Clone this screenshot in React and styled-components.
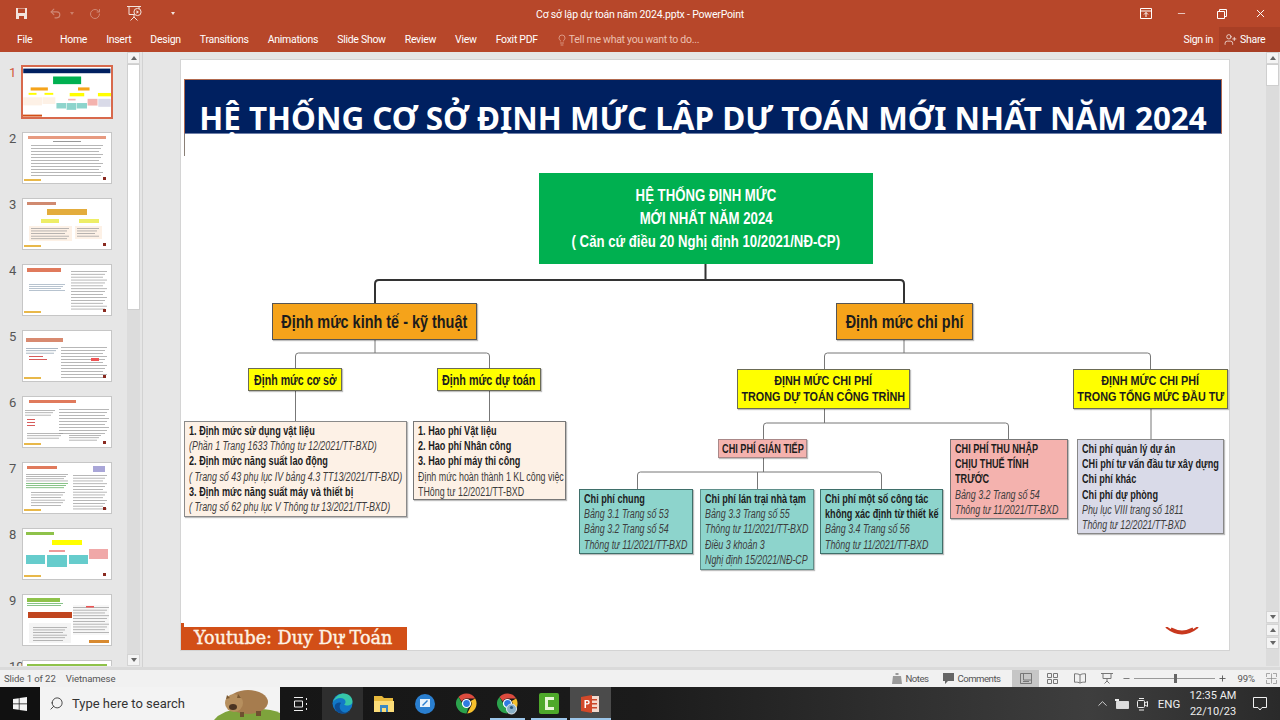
import React from "react";
import styled, { createGlobalStyle } from "styled-components";
import { Lightbulb, Search, UserPlus, X, Minus, Plus, ChevronUp, Undo2, RotateCw } from "lucide-react";

const Global = createGlobalStyle`
  html, body { margin: 0; padding: 0; background: #e6e6e6; }
  * { box-sizing: border-box; }
`;

const UI = `Roboto, "Noto Sans", sans-serif`;
const DIAGRAM = `"Liberation Sans", Arial, sans-serif`;

const Page = styled.div`
  width: 1280px;
  height: 720px;
  overflow: hidden;
  display: flex;
  flex-direction: column;
  font-family: ${UI};
`;

/* ribbon */
const Ribbon = styled.header`
  height: 52px;
  flex: none;
  background: #b7472a;
  color: #fff;
  display: flex;
  flex-direction: column;
`;
const TitleRow = styled.div`
  height: 27px;
  display: flex;
  align-items: center;
  position: relative;
  padding-left: 15px;
`;
const Qat = styled.div`
  display: flex;
  align-items: center;
  width: 190px;
`;
const QatSlot = styled.span`
  display: flex;
  align-items: center;
  justify-content: center;
  width: ${p => p.$w}px;
  opacity: ${p => (p.$dim ? 0.35 : 1)};
`;
const Caret = styled.i`
  width: 0;
  height: 0;
  border-left: 2px solid transparent;
  border-right: 2px solid transparent;
  border-top: 3px solid #f3e4de;
`;
const DocTitle = styled.div`
  position: absolute;
  left: 536px;
  top: 8px;
  font-size: 10.5px;
  letter-spacing: -0.2px;
  white-space: nowrap;
`;
const WindowButtons = styled.div`
  margin-left: auto;
  display: flex;
  align-items: center;
  padding-right: 2px;
`;
const WinBtn = styled.span`
  display: flex;
  justify-content: center;
  width: ${p => p.$w}px;
`;
const TabRow = styled.nav`
  height: 25px;
  display: flex;
  align-items: center;
  font-size: 10.5px;
  letter-spacing: -0.28px;
  padding-left: 17px;
`;
const FileTab = styled.span`
  width: 43px;
`;
const Tab = styled.span`
  margin-right: 19px;
  white-space: nowrap;
`;
const TellMe = styled.span`
  display: flex;
  align-items: center;
  gap: 1px;
  margin-left: -1px;
  color: #ecc0b0;
  white-space: nowrap;
`;
const Account = styled.div`
  margin-left: auto;
  display: flex;
  align-items: center;
  height: 100%;
`;
const SignIn = styled.span`
  margin-right: 6px;
`;
const Share = styled.span`
  width: 61px;
  height: 100%;
  padding-left: 5px;
  background: #a83f25;
  display: flex;
  align-items: center;
  gap: 3px;
`;

/* work area */
const Work = styled.main`
  flex: 1;
  min-height: 0;
  display: flex;
  background: #e6e6e6;
`;
const ThumbPane = styled.aside`
  width: 143px;
  flex: none;
  display: flex;
  border-right: 1px solid #d2d2d2;
  overflow: hidden;
`;
const ThumbList = styled.div`
  width: 127px;
  flex: none;
  padding-top: 15px;
  display: flex;
  flex-direction: column;
  gap: 16px;
  height: 614px;
  overflow: hidden;
`;
const ThumbRow = styled.div`
  height: 50px;
  flex: none;
  display: flex;
  padding-left: 9px;
  color: ${p => (p.$active ? "#d2583c" : "#555")};
  font-size: 13px;
  line-height: 16px;
`;
const ThumbNo = styled.span`
  width: 14px;
  margin-top: -2px;
`;
const ThumbCard = styled.svg`
  display: block;
  width: 88px;
  height: 50px;
  background: #fff;
  outline: ${p => (p.$active ? "2px solid #d8694c" : "1px solid #c6c6c6")};
`;
const Scroll = styled.div`
  width: 13px;
  height: 614px;
  flex: none;
  background: #dcdcdc;
  display: flex;
  flex-direction: column;
`;
const ScrollBtn = styled.div`
  height: 12px;
  flex: none;
  background: #f4f4f4;
  border: 1px solid #d4d4d4;
  display: flex;
  align-items: center;
  justify-content: center;
  margin-top: ${p => p.$mt || 0}px;
`;
const Arrow = styled.i`
  width: 0;
  height: 0;
  border-left: 3.5px solid transparent;
  border-right: 3.5px solid transparent;
  ${p => (p.$down ? "border-top: 4px solid #666;" : "border-bottom: 4px solid #666;")}
`;
const ScrollThumb = styled.div`
  height: ${p => p.$h}px;
  flex: none;
  background: #fff;
  border: 1px solid #cfcfcf;
`;
const Canvas = styled.section`
  flex: 1;
  min-width: 0;
  padding: 8px 0 0 38px;
`;
const Slide = styled.div`
  position: relative;
  width: 1048px;
  height: 590px;
  background: #fff;
  box-shadow: 0 0 0 1px #d4d4d4;
`;
const MainScroll = styled(Scroll)`
  margin-right: 1px;
`;

/* slide content */
const Banner = styled.h1`
  position: absolute;
  left: 3px;
  top: 19px;
  width: 1038px;
  height: 55px;
  margin: 0;
  background: #002060;
  border: 1px solid #b06a50;
  border-bottom-color: #6f7fa8;
  color: #fff;
  font: 700 31.4px "Noto Sans", sans-serif;
  line-height: 76px;
  text-align: center;
  white-space: nowrap;
`;
const BannerTail = styled.div`
  position: absolute;
  left: 3px;
  top: 74px;
  width: 1px;
  height: 22px;
  background: #8a7f76;
`;
const Wires = styled.svg`
  position: absolute;
  inset: 0;
  width: 100%;
  height: 100%;
`;
const Node = styled.div`
  position: absolute;
  left: ${p => p.$x - 181}px;
  top: ${p => p.$y - 60}px;
  width: ${p => p.$w}px;
  height: ${p => p.$h}px;
  background: ${p => p.$bg};
  border: 1px solid ${p => p.$line || "#6b6b55"};
  box-shadow: ${p => (p.$flat ? "none" : "1px 1px 1px rgba(0,0,0,.25)")};
  font-family: ${DIAGRAM};
  color: #1c1c1c;
`;
const CenterNode = styled(Node)`
  display: flex;
  flex-direction: column;
  align-items: center;
  justify-content: center;
  font-weight: 700;
  font-size: ${p => p.$size}px;
  line-height: ${p => p.$lh}px;
  color: ${p => p.$color || "#1c1c1c"};
`;
const Line = styled.span`
  display: block;
  flex: none;
  width: max-content;
  white-space: nowrap;
  transform: scaleX(${p => p.$sx || 0.8});
  transform-origin: center;
`;
const ListNode = styled(Node)`
  padding: 2px 0 0 4px;
  font-size: 12px;
  line-height: 15.2px;
`;
const Head = styled.span`
  display: block;
  width: max-content;
  white-space: nowrap;
  font-weight: 700;
  transform: scaleX(0.76);
  transform-origin: left;
`;
const Note = styled.span`
  display: block;
  width: max-content;
  white-space: nowrap;
  font-style: ${p => (p.$plain ? "normal" : "italic")};
  color: #3d3d3d;
  transform: scaleX(0.74);
  transform-origin: left;
`;
const YoutubeBar = styled.div`
  position: absolute;
  left: 0;
  bottom: 0;
  width: 226px;
  height: 23px;
  background: #d24f17;
  color: #fdf3e6;
  font: 400 17.6px "DejaVu Serif", serif;
  -webkit-text-stroke: 0.4px #fdf3e6;
  line-height: 23px;
  padding-left: 13px;
  white-space: nowrap;
`;
const YoutubeNotch = styled.i`
  position: absolute;
  left: 0;
  bottom: 23px;
  width: 3px;
  height: 4px;
  background: #d24f17;
`;
const LogoArc = styled.svg`
  position: absolute;
  left: 984px;
  top: 567px;
  width: 34px;
  height: 10px;
`;

/* status bar */
const Gutter = styled.div`
  height: 3px;
  flex: none;
  background: #dadada;
`;
const Status = styled.footer`
  height: 17px;
  flex: none;
  background: #f1f1f1;
  color: #555;
  font-size: 9.6px;
  letter-spacing: -0.1px;
  display: flex;
  align-items: center;
  white-space: nowrap;
`;
const StatusText = styled.span`
  margin-left: ${p => p.$ml}px;
`;
const StatusRight = styled.div`
  margin-left: auto;
  height: 100%;
  display: flex;
  align-items: center;
`;
const StatusItem = styled.span`
  display: flex;
  align-items: center;
  gap: 3px;
  margin-left: ${p => p.$ml || 0}px;
  margin-right: ${p => p.$mr || 0}px;
`;
const StatusLabel = styled(StatusItem)`
  letter-spacing: -0.5px;
`;
const ViewBtn = styled.span`
  width: 27px;
  height: 100%;
  display: flex;
  align-items: center;
  justify-content: center;
  background: ${p => (p.$active ? "#c6c6c6" : "transparent")};
`;
const ZoomTrack = styled.span`
  position: relative;
  width: 81px;
  height: 1px;
  background: #999;
`;
const ZoomKnob = styled.i`
  position: absolute;
  left: 40px;
  top: -4px;
  width: 3px;
  height: 9px;
  background: #666;
`;

/* taskbar */
const Taskbar = styled.footer`
  height: 33px;
  flex: none;
  display: flex;
  align-items: stretch;
  color: #eee;
  background: linear-gradient(90deg, #121212 0%, #1b1b1b 50%, #3e3e3e 85%, #2a2a2a 100%);
`;
const StartBtn = styled.div`
  width: 40px;
  background: #111;
  display: flex;
  align-items: center;
  justify-content: center;
`;
const SearchBox = styled.div`
  position: relative;
  width: 240px;
  background: #f3f3f3;
  color: #333;
  display: flex;
  align-items: center;
  padding-left: 9px;
  gap: 8px;
  font-size: 13px;
  overflow: hidden;
`;
const SearchGlass = styled(Search)`
  transform: scaleX(-1);
`;
const Mascot = styled.svg`
  position: absolute;
  right: 0;
  bottom: 0;
  width: 66px;
  height: 33px;
`;
const TaskSlot = styled.div`
  position: relative;
  width: ${p => p.$w || 41.3}px;
  display: flex;
  align-items: center;
  justify-content: center;
  background: ${p => p.$bg || "transparent"};
`;
const RunMark = styled.i`
  position: absolute;
  bottom: 0;
  left: ${p => p.$l || 0}px;
  right: ${p => p.$r || 0}px;
  height: 2px;
  background: #9cc6ea;
`;
const Tray = styled.div`
  margin-left: auto;
  display: flex;
  align-items: center;
  font-size: 11.5px;
  white-space: nowrap;
`;
const TraySlot = styled.span`
  display: flex;
  align-items: center;
  justify-content: center;
  width: ${p => p.$w}px;
`;
const Clock = styled.span`
  width: 54px;
  text-align: center;
  line-height: 16px;
  font-size: 11px;
`;

const lines = (x, y, w, n, step, c = "#999") =>
  Array.from({ length: n }, (_, i) => [x, y + i * step, w - (i % 3) * 2, 0.7, c]);
const sc = ([x, y, w, h, c]) => [(x - 181) * 0.084, (y - 60) * 0.084, w * 0.084, h * 0.084, c];

const thumb1 = [
  [184, 79, 1038, 55, "#002060"], [539, 173, 334, 91, "#00b050"], [272, 303, 205, 37, "#f5a31a"],
  [836, 303, 137, 37, "#f5a31a"], [248, 368, 94, 23, "#ff0"], [437, 368, 104, 23, "#ff0"],
  [737, 369, 173, 40, "#ff0"], [1073, 369, 155, 40, "#ff0"], [184, 421, 223, 96, "#fdf1e6"],
  [413, 421, 153, 79, "#fdf1e6"], [718, 439, 89, 19, "#f4b2ae"], [950, 439, 118, 80, "#f4b2ae"],
  [1077, 439, 147, 95, "#d9dae8"], [579, 489, 114, 65, "#8dd4cc"], [700, 489, 114, 81, "#8dd4cc"],
  [820, 489, 123, 65, "#8dd4cc"], [181, 627, 226, 23, "#d24f17"],
].map(sc);

const foot = [[1, 46, 17, 2, "#e8b84a"], [80, 44, 3, 3, "#8a2a20"]];
const THUMBS = [
  thumb1,
  [[5, 3, 78, 3, "#e79a80"], [30, 8, 28, 1, "#999"], ...lines(8, 12, 72, 11, 3), ...foot],
  [[4, 3, 29, 3, "#d08a70"], [24, 10, 40, 6, "#e3ac3c"], [18, 20, 18, 4, "#ee6"], [56, 20, 20, 4, "#ee6"],
   [6, 27, 43, 15, "#fdf1e6"], [52, 27, 27, 13, "#fdf1e6"], ...lines(8, 29, 38, 5, 2.6), ...lines(54, 29, 22, 4, 2.6), ...foot],
  [[4, 3, 34, 4, "#e07a5c"], ...lines(6, 19, 36, 4, 2, "#9ab"), ...lines(48, 6, 36, 14, 2.9), ...foot],
  [[3, 7, 37, 4, "#d88a70"], ...lines(3, 17, 32, 3, 2.4, "#89a"), [6, 25, 14, 0.8, "#c33"], [6, 28, 18, 0.8, "#c33"],
   ...lines(38, 16, 46, 11, 3), [68, 27, 8, 3, "#e55"], ...foot],
  [[6, 3, 47, 3, "#e07a5c"], ...lines(2, 13, 30, 3, 2.4), [4, 22, 8, 0.8, "#c33"], [4, 25, 8, 0.8, "#c33"], [4, 28, 8, 0.8, "#c33"],
   ...lines(36, 12, 50, 9, 3), ...lines(4, 36, 36, 3, 2.4), ...lines(46, 38, 32, 3, 2.4), ...foot],
  [[4, 3, 30, 3, "#e07a5c"], [70, 3, 12, 6, "#a9a6d8"], ...lines(3, 11, 42, 4, 2.2), ...lines(3, 20, 42, 3, 2.2, "#5a5"),
   ...lines(8, 29, 34, 6, 2.6), ...lines(50, 12, 34, 13, 2.8), ...foot],
  [[3, 3, 28, 3, "#8ec24a"], [29, 11, 30, 5, "#ff0"], [26, 21, 16, 2, "#e99"], [3, 26, 19, 9, "#6cc"], [24, 26, 20, 12, "#6cc"],
   [46, 26, 19, 9, "#6cc"], [66, 20, 19, 10, "#f0a8a8"], ...foot],
  [[4, 3, 33, 4, "#8ec24a"], ...lines(4, 8, 36, 2, 2, "#5a5"), [5, 17, 44, 6, "#c0451f"], [6, 28, 42, 20, "#f4f4f4"], ...lines(10, 32, 34, 6, 2.6),
   [50, 10, 36, 30, "#f7f7f7"], ...lines(50, 12, 36, 10, 2.8), [63, 11, 8, 1.5, "#e55"], [66, 45, 20, 3, "#d88a30"]],
  [[4, 3, 80, 3, "#8ec24a"]],
];

const SaveIcon = () => (
  <svg width="13" height="13" viewBox="0 0 13 13">
    <path d="M1 1h11v11H1z" fill="#f3e4de" />
    <path d="M3 1.500h7v4.500H3z" fill="#b7472a" />
    <path d="M4 9h5v3H4z" fill="#b7472a" />
  </svg>
);
const PresentIcon = () => (
  <svg width="16" height="17" viewBox="0 0 16 17" fill="none" stroke="#f3e4de">
    <path d="M0 1.500h14M2 1.500v8h10v-8M7 10v2M3.500 15.500L7 12l3.500 3.500" />
    <circle cx="10.500" cy="7" r="3.600" fill="#b7472a" />
    <path d="M9.500 5.200l2.500 1.800-2.500 1.800z" fill="#f3e4de" stroke="none" />
  </svg>
);
const RibbonDisplay = () => (
  <svg width="12" height="11" viewBox="0 0 12 11" fill="none" stroke="#fff">
    <path d="M.5.5h11v10H.5zM.5 3h11" />
    <path d="M6 9V4.500M4 6.500l2-2 2 2" />
  </svg>
);
const RestoreIcon = () => (
  <svg width="10" height="10" viewBox="0 0 10 10" fill="none" stroke="#fff">
    <path d="M.5 2.500h7v7h-7zM2.500 2.500v-2h7v7h-2" />
  </svg>
);
const WindowsLogo = () => (
  <svg width="14" height="14" viewBox="0 0 14 14" fill="#f4f4f4">
    <path d="M0 2l5.800-.8v5.400H0zM6.500 1.100L14 0v6.600H6.500zM0 7.300h5.800v5.500L0 12zM6.500 7.300H14V14l-7.500-1z" />
  </svg>
);
const NotesIcon = () => (
  <svg width="10" height="11" viewBox="0 0 10 11" fill="#9a9a9a">
    <path d="M3.500 0h3v2h-3zM1 3h8l1 8H0z" />
  </svg>
);
const CommentIcon = () => (
  <svg width="11" height="11" viewBox="0 0 11 11" fill="#666">
    <path d="M0 0h11v8H5l-3 3V8H0z" />
  </svg>
);
const NormalView = () => (
  <svg width="12" height="11" viewBox="0 0 12 11" fill="none" stroke="#777">
    <path d="M.5.5h11v10H.5zM3.500.5v6.500h8M3 8.500h6" />
  </svg>
);
const GridView = () => (
  <svg width="11" height="11" viewBox="0 0 11 11" fill="none" stroke="#777">
    <path d="M.5.5h4v4h-4zM6.500.5h4v4h-4zM.5 6.500h4v4h-4zM6.500 6.500h4v4h-4z" />
  </svg>
);
const ReadView = () => (
  <svg width="12" height="11" viewBox="0 0 12 11" fill="none" stroke="#777">
    <path d="M6 2C5 1 3 .7.5.8v8.400C3 9 5 9.300 6 10.200 7 9.300 9 9 11.500 9.200V.8C9 .7 7 1 6 2zM6 2v8" />
  </svg>
);
const ShowView = () => (
  <svg width="12" height="11" viewBox="0 0 12 11" fill="none" stroke="#777">
    <path d="M0 .5h12M2 .5v5h8v-5M6 6v2M3.500 10.500L6 8l2.500 2.500" />
  </svg>
);
const FitIcon = () => (
  <svg width="11" height="11" viewBox="0 0 11 11" fill="none" stroke="#888">
    <path d="M.5 4V.5H4M7 .5h3.500V4M10.500 7v3.500H7M4 10.500H.5V7M.5 5.500h10M5.500.5v10" strokeWidth=".7" />
  </svg>
);
const TaskView = () => (
  <svg width="14" height="14" viewBox="0 0 14 14" fill="none" stroke="#eee">
    <path d="M0 .5h9M0 13.500h9M.5 4h8v6h-8zM12.500 1v2M12.500 6v2M12.500 11v2" />
  </svg>
);
const EdgeIcon = () => (
  <svg width="21" height="21" viewBox="0 0 21 21">
    <circle cx="10.500" cy="10.500" r="10" fill="#1278c8" />
    <path d="M1 9C3 3 8 .5 12 .5c5 0 8.500 4 8.500 8 0 3-3 4-5 4-1.500 0-3-.5-3.500-1 2-1 2-4 0-5.500C9 4 3.500 5 1 9z" fill="#36c6a8" />
    <path d="M8 20c-4-1-6-5-5-8 1-2 4-3 6-2-2 2-2 7 2 9 3 1.200 6 .3 7.500-1C15.500 21 11 21 8 20z" fill="#0c4d94" />
  </svg>
);
const FolderIcon = () => (
  <svg width="20" height="18" viewBox="0 0 20 18">
    <path d="M0 1h8l2 2h9v14H0z" fill="#e8b93c" />
    <path d="M0 6h20v11H0z" fill="#fbdc78" />
    <path d="M6 10h8v7h-2v-4H8v4H6z" fill="#3b8ac4" />
  </svg>
);
const BlueApp = () => (
  <svg width="20" height="20" viewBox="0 0 20 20">
    <circle cx="10" cy="10" r="10" fill="#2a7fd0" />
    <path d="M5 5h10v8H5z" fill="#e8f2fb" />
    <path d="M8 14h4v1.500H8zM7 11l5-5 1 1-5 5z" fill="#2a7fd0" />
  </svg>
);
const ChromeIcon = ({ badge }) => (
  <svg width="21" height="22" viewBox="0 0 21 22">
    <path d="M10.500.5a10 10 0 0 1 8.700 5H10.500a5 5 0 0 0-4.600 3L2.500 4a10 10 0 0 1 8-3.500z" fill="#dd4b3e" />
    <path d="M19.200 5.500a10 10 0 0 1-8 15l3.600-7a5 5 0 0 0 0-5.500z" fill="#f6c02c" />
    <path d="M2.500 4l4 7a5 5 0 0 0 6 3l-2 6.500A10 10 0 0 1 2.500 4z" fill="#2ba24c" />
    <circle cx="10.500" cy="10.500" r="4" fill="#2f7be0" stroke="#fff" strokeWidth="1.200" />
    {badge && <circle cx="14.500" cy="16" r="5" fill="#8ab0c8" stroke="#dfe8ee" />}
    {badge && <circle cx="14.500" cy="14.500" r="1.600" fill="#2a5a80" />}
  </svg>
);
const CamtasiaIcon = () => (
  <svg width="20" height="21" viewBox="0 0 20 21">
    <rect width="20" height="21" rx="2" fill="#4ea82a" />
    <path d="M15 4H6v13h9v-3H9V7h6z" fill="#e8f5d8" />
  </svg>
);
const PptIcon = () => (
  <svg width="19" height="18" viewBox="0 0 19 18">
    <path d="M7 1h11v16H7z" fill="#f3d9ce" />
    <path d="M10 4h6v1.500h-6zM10 8h6v1.500h-6zM10 12h6v1.500h-6z" fill="#c8462a" />
    <path d="M0 2l11-2v18L0 16z" fill="#d2492a" />
    <path d="M3.500 5h3a2 2 0 0 1 0 4.500H5V13H3.500zM5 6.300v2h1.300a1 1 0 0 0 0-2z" fill="#fff" />
  </svg>
);
const BatteryIcon = () => (
  <svg width="15" height="10" viewBox="0 0 15 10">
    <path d="M0 0h4v2h-4z" fill="#eee" />
    <path d="M1.500 2.500h12v7h-12z" fill="#ddd" stroke="#eee" strokeWidth=".8" />
  </svg>
);
const MeetIcon = () => (
  <svg width="11" height="14" viewBox="0 0 11 14" fill="none" stroke="#eee">
    <rect x=".5" y="3.500" width="7" height="7" rx="1" />
    <path d="M8 6l2.500-1.500v5L8 8M2 1.500h5M2 13h5" />
  </svg>
);
const NotifyIcon = () => (
  <svg width="14" height="14" viewBox="0 0 14 14" fill="none" stroke="#f0f0f0">
    <path d="M.5.5h13v10H9L7 13 5 10.500H.5z" />
  </svg>
);

const App = () => {
  return (
    <Page>
      <Global />
      <Ribbon>
        <TitleRow>
          <Qat>
            <QatSlot $w={13}><SaveIcon /></QatSlot>
            <QatSlot $w={16} />
            <QatSlot $w={22} $dim><Undo2 size={13} strokeWidth={2} /></QatSlot>
            <QatSlot $w={12} $dim><Caret /></QatSlot>
            <QatSlot $w={6} />
            <QatSlot $w={22} $dim><RotateCw size={12} strokeWidth={2} /></QatSlot>
            <QatSlot $w={58}><PresentIcon /></QatSlot>
            <QatSlot $w={18}><Caret /></QatSlot>
          </Qat>
          <DocTitle>Cơ sở lập dự toán năm 2024.pptx - PowerPoint</DocTitle>
          <WindowButtons>
            <WinBtn $w={28}><RibbonDisplay /></WinBtn>
            <WinBtn $w={42}><Minus size={11} strokeWidth={1.5} /></WinBtn>
            <WinBtn $w={40}><RestoreIcon /></WinBtn>
            <WinBtn $w={36}><X size={13} strokeWidth={1.8} /></WinBtn>
          </WindowButtons>
        </TitleRow>
        <TabRow>
          <FileTab>File</FileTab>
          {["Home", "Insert", "Design", "Transitions", "Animations", "Slide Show", "Review", "View", "Foxit PDF"].map(t => (
            <Tab key={t}>{t}</Tab>
          ))}
          <TellMe>
            <Lightbulb size={12} strokeWidth={1.3} />
            Tell me what you want to do...
          </TellMe>
          <Account>
            <SignIn>Sign in</SignIn>
            <Share><UserPlus size={13} strokeWidth={1.3} />Share</Share>
          </Account>
        </TabRow>
      </Ribbon>

      <Work>
        <ThumbPane>
          <ThumbList>
            {THUMBS.map((rects, i) => (
              <ThumbRow key={i} $active={i === 0}>
                <ThumbNo>{i + 1}</ThumbNo>
                <ThumbCard $active={i === 0} viewBox="0 0 88 50">
                  {rects.map(([x, y, w, h, c], j) => (
                    <rect key={j} x={x} y={y} width={w} height={h} fill={c} />
                  ))}
                </ThumbCard>
              </ThumbRow>
            ))}
          </ThumbList>
          <Scroll>
            <ScrollBtn><Arrow /></ScrollBtn>
            <ScrollThumb $h={246} />
            <ScrollBtn $mt={344}><Arrow $down /></ScrollBtn>
          </Scroll>
        </ThumbPane>

        <Canvas>
          <Slide>
            <Banner>HỆ THỐNG CƠ SỞ ĐỊNH MỨC LẬP DỰ TOÁN MỚI NHẤT NĂM 2024</Banner>
            <BannerTail />
            <Wires viewBox="181 60 1048 590" fill="none">
              <path d="M705.500 264v16M375 303v-19q0-4 4-4h521q4 0 4 4v19" stroke="#333" strokeWidth="2" />
              <g stroke="#777" strokeWidth="1">
                <path d="M375 340v13M295.500 368v-12q0-3 3-3h188q3 0 3 3v12M295.500 391v30M489.500 391v30" />
                <path d="M904 340v13M824.500 369v-13q0-3 3-3h320q3 0 3 3v13M1151 409v30" />
                <path d="M824.500 409v14M763.500 439v-13q0-3 3-3h239q3 0 3 3v13" />
                <path d="M763.500 458v14M637.500 489v-14q0-3 3-3h238q3 0 3 3v14M757.500 472v17" />
              </g>
            </Wires>

            <CenterNode $x={539} $y={173} $w={334} $h={91} $bg="#00b050" $line="#00b050" $flat $size={16.5} $lh={23} $color="#fff">
              <Line>HỆ THỐNG ĐỊNH MỨC</Line>
              <Line>MỚI NHẤT NĂM 2024</Line>
              <Line>( Căn cứ điều 20 Nghị định 10/2021/NĐ-CP)</Line>
            </CenterNode>
            <CenterNode $x={272} $y={303} $w={205} $h={37} $bg="#f5a31a" $line="#555" $size={18.5} $lh={22}>
              <Line $sx={0.78}>Định mức kinh tế - kỹ thuật</Line>
            </CenterNode>
            <CenterNode $x={836} $y={303} $w={137} $h={37} $bg="#f5a31a" $line="#555" $size={18.5} $lh={22}>
              <Line $sx={0.78}>Định mức chi phí</Line>
            </CenterNode>
            <CenterNode $x={248} $y={368} $w={94} $h={23} $bg="#ffff00" $size={14} $lh={18}>
              <Line $sx={0.76}>Định mức cơ sở</Line>
            </CenterNode>
            <CenterNode $x={437} $y={368} $w={104} $h={23} $bg="#ffff00" $size={14} $lh={18}>
              <Line $sx={0.77}>Định mức dự toán</Line>
            </CenterNode>
            <CenterNode $x={737} $y={369} $w={173} $h={40} $bg="#ffff00" $size={13.5} $lh={16}>
              <Line>ĐỊNH MỨC CHI PHÍ</Line>
              <Line>TRONG DỰ TOÁN CÔNG TRÌNH</Line>
            </CenterNode>
            <CenterNode $x={1073} $y={369} $w={155} $h={40} $bg="#ffff00" $size={13.5} $lh={16}>
              <Line>ĐỊNH MỨC CHI PHÍ</Line>
              <Line>TRONG TỔNG MỨC ĐẦU TƯ</Line>
            </CenterNode>

            <ListNode $x={184} $y={421} $w={223} $h={96} $bg="#fdf1e6" $line="#8a8a8a">
              <Head>1. Định mức sử dụng vật liệu</Head>
              <Note>(Phần 1 Trang 1633 Thông tư 12/2021/TT-BXD)</Note>
              <Head>2. Định mức năng suất lao động</Head>
              <Note>( Trang số 43 phụ lục IV bảng 4.3 TT13/2021/TT-BXD)</Note>
              <Head>3. Định mức năng suất máy và thiết bị</Head>
              <Note>( Trang số 62 phụ lục V Thông tư 13/2021/TT-BXD)</Note>
            </ListNode>
            <ListNode $x={413} $y={421} $w={153} $h={79} $bg="#fdf1e6" $line="#777">
              <Head>1. Hao phí Vật liệu</Head>
              <Head>2. Hao phí Nhân công</Head>
              <Head>3. Hao phí máy thi công</Head>
              <Note $plain>Định mức hoàn thành 1 KL công việc</Note>
              <Note $plain>THông tư 12/2021/TT-BXD</Note>
            </ListNode>

            <CenterNode $x={718} $y={439} $w={89} $h={19} $bg="#f4b2ae" $line="#a88" $size={12.5} $lh={16}>
              <Line $sx={0.73}>CHI PHÍ GIÁN TIẾP</Line>
            </CenterNode>
            <ListNode $x={950} $y={439} $w={118} $h={80} $bg="#f4b2ae" $line="#777">
              <Head>CHI PHÍ THU NHẬP</Head>
              <Head>CHỊU THUẾ TÍNH</Head>
              <Head>TRƯỚC</Head>
              <Note>Bảng 3.2 Trang số 54</Note>
              <Note>Thông tư 11/2021/TT-BXD</Note>
            </ListNode>
            <ListNode $x={1077} $y={439} $w={147} $h={95} $bg="#d9dae8" $line="#888">
              <Head>Chi phí quản lý dự án</Head>
              <Head>CHi phí tư vấn đầu tư xây dựng</Head>
              <Head>Chi phí khác</Head>
              <Head>Chi phí dự phòng</Head>
              <Note>Phụ lục VIII trang số 1811</Note>
              <Note>Thông tư 12/2021/TT-BXD</Note>
            </ListNode>

            <ListNode $x={579} $y={489} $w={114} $h={65} $bg="#8dd4cc" $line="#3f6f6a">
              <Head>Chi phí chung</Head>
              <Note>Bảng 3.1 Trang số 53</Note>
              <Note>Bảng 3.2 Trang số 54</Note>
              <Note>Thông tư 11/2021/TT-BXD</Note>
            </ListNode>
            <ListNode $x={700} $y={489} $w={114} $h={81} $bg="#8dd4cc" $line="#5f8f8a">
              <Head>Chi phí lán trại nhà tạm</Head>
              <Note>Bảng 3.3 Trang số 55</Note>
              <Note>Thông tư 11/2021/TT-BXD</Note>
              <Note>Điều 3 khoản 3</Note>
              <Note>Nghị định 15/2021/NĐ-CP</Note>
            </ListNode>
            <ListNode $x={820} $y={489} $w={123} $h={65} $bg="#8dd4cc" $line="#3f6f6a">
              <Head>Chi phí một số công tác</Head>
              <Head>không xác định từ thiết kế</Head>
              <Note>Bảng 3.4 Trang số 56</Note>
              <Note>Thông tư 11/2021/TT-BXD</Note>
            </ListNode>

            <YoutubeNotch />
            <YoutubeBar>Youtube: Duy Dự Toán</YoutubeBar>
            <LogoArc viewBox="0 0 34 10" fill="none" stroke="#c8381e" strokeWidth="2">
              <path d="M1 0q16 13 32 0M6 1.500q11 6 22 0" />
            </LogoArc>
          </Slide>
        </Canvas>

        <MainScroll>
          <ScrollBtn><Arrow /></ScrollBtn>
          <ScrollThumb $h={22} />
          <ScrollBtn $mt={525}><Arrow $down /></ScrollBtn>
          <ScrollBtn $mt={1}><Arrow /></ScrollBtn>
          <ScrollBtn $mt={1}><Arrow $down /></ScrollBtn>
        </MainScroll>
      </Work>

      <Gutter />
      <Status>
        <StatusText $ml={4}>Slide 1 of 22</StatusText>
        <StatusText $ml={10}>Vietnamese</StatusText>
        <StatusRight>
          <StatusLabel $mr={15}><NotesIcon />Notes</StatusLabel>
          <StatusLabel $mr={12}><CommentIcon />Comments</StatusLabel>
          <ViewBtn $active><NormalView /></ViewBtn>
          <ViewBtn><GridView /></ViewBtn>
          <ViewBtn><ReadView /></ViewBtn>
          <ViewBtn><ShowView /></ViewBtn>
          <StatusItem $ml={2}>
            <Minus size={9} color="#555" strokeWidth={2} />
            <ZoomTrack><ZoomKnob /></ZoomTrack>
            <Plus size={9} color="#555" strokeWidth={2.4} />
          </StatusItem>
          <StatusItem $mr={11}><StatusText $ml={10}>99%</StatusText></StatusItem>
          <StatusItem $mr={3}><FitIcon /></StatusItem>
        </StatusRight>
      </Status>

      <Taskbar>
        <StartBtn><WindowsLogo /></StartBtn>
        <SearchBox>
          <SearchGlass size={15} strokeWidth={1.4} />
          Type here to search
          <Mascot viewBox="0 0 66 33">
            <path d="M0 33q8-10 26-11h18q14 0 22 4v7z" fill="#7ea33c" />
            <ellipse cx="34" cy="15" rx="20" ry="12" fill="#a67c4e" />
            <ellipse cx="20" cy="16" rx="9" ry="9" fill="#b68f5e" />
            <path d="M13 8l3 3-4 1zM24 7l3 4-4 0z" fill="#7a5832" />
            <ellipse cx="19" cy="20" rx="4" ry="3" fill="#4a3422" />
            <path d="M26 25h4v5h-4zM42 24h5v5h-5z" fill="#6f5030" />
          </Mascot>
        </SearchBox>
        <TaskSlot $w={42}><TaskView /></TaskSlot>
        <TaskSlot $bg="#2e2e2e"><EdgeIcon /></TaskSlot>
        <TaskSlot><FolderIcon /></TaskSlot>
        <TaskSlot><BlueApp /></TaskSlot>
        <TaskSlot><ChromeIcon /></TaskSlot>
        <TaskSlot><ChromeIcon badge /><RunMark $l={3} $r={3} /></TaskSlot>
        <TaskSlot><CamtasiaIcon /><RunMark $l={3} $r={3} /></TaskSlot>
        <TaskSlot $bg="#4b4b4b"><PptIcon /><RunMark /></TaskSlot>
        <Tray>
          <TraySlot $w={18}><ChevronUp size={15} strokeWidth={1.3} /></TraySlot>
          <TraySlot $w={22}><BatteryIcon /></TraySlot>
          <TraySlot $w={19}><MeetIcon /></TraySlot>
          <TraySlot $w={34}>ENG</TraySlot>
          <Clock>12:35 AM<br />22/10/23</Clock>
          <TraySlot $w={40}><NotifyIcon /></TraySlot>
        </Tray>
      </Taskbar>
    </Page>
  );
};

export default App;
